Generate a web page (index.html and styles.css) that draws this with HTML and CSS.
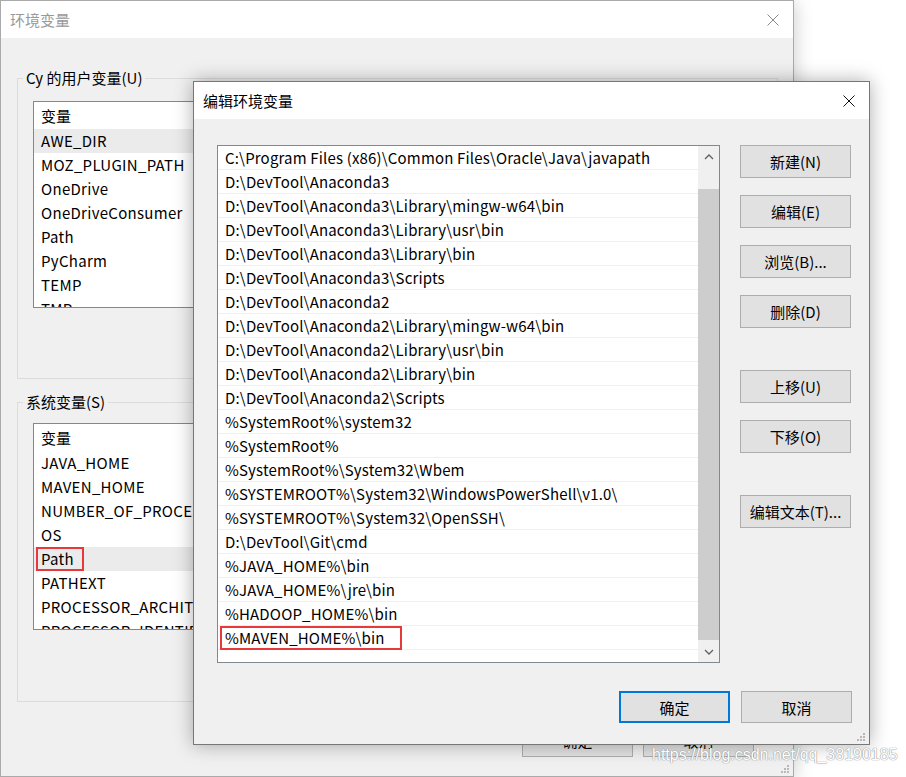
FILE: index.html
```html
<!DOCTYPE html>
<html lang="zh-CN">
<head>
    <meta charset="UTF-8">
    <title>编辑环境变量</title>
    <link rel="stylesheet" href="styles.css">
</head>
<body>
<div class="desk">
    <!-- background window: 环境变量 -->
    <div class="win main-win">
        <div class="titlebar inactive">
            <span class="title">环境变量</span>
            <svg class="close" width="12" height="12" viewBox="0 0 12 12"><path d="M0.5 0.5 L11.5 11.5 M11.5 0.5 L0.5 11.5" stroke="#8a8a8a" stroke-width="1" fill="none"/></svg>
        </div>
        <div class="win-body">
            <fieldset class="group user-group">
                <legend>Cy 的用户变量(U)</legend>
                <div class="listview">
                    <div class="lv-head">变量</div>
                    <div class="lv-row selected">AWE_DIR</div>
                    <div class="lv-row">MOZ_PLUGIN_PATH</div>
                    <div class="lv-row">OneDrive</div>
                    <div class="lv-row">OneDriveConsumer</div>
                    <div class="lv-row">Path</div>
                    <div class="lv-row">PyCharm</div>
                    <div class="lv-row">TEMP</div>
                    <div class="lv-row">TMP</div>
                </div>
            </fieldset>
            <fieldset class="group sys-group">
                <legend>系统变量(S)</legend>
                <div class="listview">
                    <div class="lv-head">变量</div>
                    <div class="lv-row">JAVA_HOME</div>
                    <div class="lv-row">MAVEN_HOME</div>
                    <div class="lv-row">NUMBER_OF_PROCESSORS</div>
                    <div class="lv-row">OS</div>
                    <div class="lv-row selected"><span class="mark">Path</span></div>
                    <div class="lv-row">PATHEXT</div>
                    <div class="lv-row">PROCESSOR_ARCHITECTURE</div>
                    <div class="lv-row">PROCESSOR_IDENTIFIER</div>
                </div>
            </fieldset>
            <div class="main-actions">
                <button class="btn">确定</button>
                <button class="btn">取消</button>
            </div>
        </div>
        <svg class="grip" width="9" height="9" viewBox="0 0 9 9" fill="#b8b8b8">
            <rect x="6" y="0" width="2" height="2"/>
            <rect x="3" y="3" width="2" height="2"/><rect x="6" y="3" width="2" height="2"/>
            <rect x="0" y="6" width="2" height="2"/><rect x="3" y="6" width="2" height="2"/><rect x="6" y="6" width="2" height="2"/>
        </svg>
    </div>

    <!-- front dialog: 编辑环境变量 -->
    <div class="win edit-win">
        <div class="titlebar">
            <span class="title">编辑环境变量</span>
            <svg class="close" width="12" height="12" viewBox="0 0 12 12"><path d="M0.5 0.5 L11.5 11.5 M11.5 0.5 L0.5 11.5" stroke="#111" stroke-width="1" fill="none"/></svg>
        </div>
        <div class="edit-body">
            <div class="edit-main">
                <div class="path-list">
                    <div class="path-rows">
                        <div class="path-row">C:\Program Files (x86)\Common Files\Oracle\Java\javapath</div>
                        <div class="path-row">D:\DevTool\Anaconda3</div>
                        <div class="path-row">D:\DevTool\Anaconda3\Library\mingw-w64\bin</div>
                        <div class="path-row">D:\DevTool\Anaconda3\Library\usr\bin</div>
                        <div class="path-row">D:\DevTool\Anaconda3\Library\bin</div>
                        <div class="path-row">D:\DevTool\Anaconda3\Scripts</div>
                        <div class="path-row">D:\DevTool\Anaconda2</div>
                        <div class="path-row">D:\DevTool\Anaconda2\Library\mingw-w64\bin</div>
                        <div class="path-row">D:\DevTool\Anaconda2\Library\usr\bin</div>
                        <div class="path-row">D:\DevTool\Anaconda2\Library\bin</div>
                        <div class="path-row">D:\DevTool\Anaconda2\Scripts</div>
                        <div class="path-row">%SystemRoot%\system32</div>
                        <div class="path-row">%SystemRoot%</div>
                        <div class="path-row">%SystemRoot%\System32\Wbem</div>
                        <div class="path-row">%SYSTEMROOT%\System32\WindowsPowerShell\v1.0\</div>
                        <div class="path-row">%SYSTEMROOT%\System32\OpenSSH\</div>
                        <div class="path-row">D:\DevTool\Git\cmd</div>
                        <div class="path-row">%JAVA_HOME%\bin</div>
                        <div class="path-row">%JAVA_HOME%\jre\bin</div>
                        <div class="path-row">%HADOOP_HOME%\bin</div>
                        <div class="path-row"><span class="mark">%MAVEN_HOME%\bin</span></div>
                    </div>
                    <div class="vscroll">
                        <div class="arrow">
                            <svg width="10" height="6" viewBox="0 0 10 6"><polyline points="1,5 5,1 9,5" fill="none" stroke="#606060" stroke-width="1.3"/></svg>
                        </div>
                        <div class="track-top"></div>
                        <div class="thumb"></div>
                        <div class="track-bottom"></div>
                        <div class="arrow">
                            <svg width="10" height="6" viewBox="0 0 10 6"><polyline points="1,1 5,5 9,1" fill="none" stroke="#606060" stroke-width="1.3"/></svg>
                        </div>
                    </div>
                </div>
                <div class="side-buttons">
                    <button class="btn">新建(N)</button>
                    <button class="btn">编辑(E)</button>
                    <button class="btn">浏览(B)...</button>
                    <button class="btn">删除(D)</button>
                    <button class="btn gap">上移(U)</button>
                    <button class="btn">下移(O)</button>
                    <button class="btn gap">编辑文本(T)...</button>
                </div>
            </div>
            <div class="edit-footer">
                <button class="btn default">确定</button>
                <button class="btn">取消</button>
            </div>
        </div>
        <svg class="grip" width="9" height="9" viewBox="0 0 9 9" fill="#b8b8b8">
            <rect x="6" y="0" width="2" height="2"/>
            <rect x="3" y="3" width="2" height="2"/><rect x="6" y="3" width="2" height="2"/>
            <rect x="0" y="6" width="2" height="2"/><rect x="3" y="6" width="2" height="2"/><rect x="6" y="6" width="2" height="2"/>
        </svg>
    </div>

    <div class="watermark">https://blog.csdn.net/qq_38190185</div>
</div>
</body>
</html>
```

FILE: styles.css
```css
body {
    margin: 0;
    background: #fff;
    font-family: "Noto Sans CJK SC", "Noto Sans", sans-serif;
    font-size: 15px;
    color: #000;
}
.desk {
    position: relative;
    width: 906px;
    height: 777px;
    overflow: hidden;
}

/* windows */
.win {
    position: absolute;
    box-sizing: border-box;
    display: flex;
    flex-direction: column;
    background: #f0f0f0;
}
.main-win {
    left: 0;
    top: 0;
    width: 794px;
    height: 777px;
    border: 1px solid #aaa;
    box-shadow: 3px 2px 16px rgba(0, 0, 0, 0.16);
}
.edit-win {
    left: 193px;
    top: 81px;
    width: 677px;
    height: 664px;
    border: 1px solid #777;
    box-shadow: 0 0 18px rgba(0, 0, 0, 0.32);
}
.titlebar {
    flex: none;
    height: 37px;
    background: #fff;
    display: flex;
    align-items: center;
    justify-content: space-between;
    padding: 0 14px 0 9px;
}
.titlebar.inactive {
    color: #999;
}
.close {
    display: block;
}
.grip {
    position: absolute;
    right: 3px;
    bottom: 2px;
}

/* background window */
.win-body {
    padding: 0 15px 0 16px;
}
.group {
    margin: 0;
    padding: 0 0 70px 5px;
    border: 1px solid #dcdcdc;
    min-width: 0;
}
.group legend {
    padding: 0 3px;
    line-height: 20px;
}
.user-group {
    margin-top: 30px;
}
.sys-group {
    margin-top: 13px;
    padding-bottom: 71px;
}
.listview {
    margin: 13px 0 0 10px;
    height: 207px;
    box-sizing: border-box;
    border: 1px solid #828790;
    background: #fff;
    overflow: hidden;
}
.sys-group .listview {
    margin-top: 11px;
}
.lv-head {
    height: 27px;
    line-height: 27px;
    padding-left: 7px;
}
.lv-row {
    height: 24px;
    line-height: 24px;
    padding-left: 7px;
    white-space: nowrap;
    letter-spacing: 0.3px;
}
.lv-row.selected {
    background: #ebebeb;
}
.mark {
    display: inline-block;
    margin-left: -5px;
    padding: 0 8px 0 3px;
    line-height: 20px;
    border: 2px solid #e8393a;
    vertical-align: top;
}
.main-actions {
    display: flex;
    justify-content: flex-end;
    gap: 10px;
    margin: 22px 24px 0 0;
}

/* buttons */
.btn {
    box-sizing: border-box;
    width: 111px;
    height: 33px;
    padding: 0;
    border: 1px solid #adadad;
    background: #e1e1e1;
    font-family: inherit;
    font-size: 15px;
    color: #000;
}
.btn.default {
    border: 2px solid #0078d7;
}

/* edit dialog */
.edit-body {
    padding: 26px 17px 0 23px;
}
.edit-main {
    display: flex;
}
.path-list {
    width: 503px;
    height: 518px;
    box-sizing: border-box;
    border: 1px solid #828790;
    background: #fff;
    display: flex;
}
.path-rows {
    width: 480px;
}
.path-row {
    box-sizing: border-box;
    height: 24px;
    border-bottom: 1px solid #f0f0f0;
    padding-left: 7px;
    display: flex;
    align-items: center;
    white-space: nowrap;
    letter-spacing: 0.17px;
}
.path-row .mark {
    line-height: 20px;
    padding-right: 15px;
}
.vscroll {
    width: 21px;
    background: #f0f0f0;
    display: flex;
    flex-direction: column;
}
.vscroll .arrow {
    height: 21px;
    display: flex;
    align-items: center;
    justify-content: center;
}
.track-top {
    height: 22px;
}
.thumb {
    height: 451px;
    background: #cdcdcd;
}
.track-bottom {
    height: 1px;
}
.side-buttons {
    margin-left: 20px;
    display: flex;
    flex-direction: column;
}
.side-buttons .btn + .btn {
    margin-top: 17px;
}
.side-buttons .btn.gap {
    margin-top: 42px;
}
.edit-footer {
    display: flex;
    justify-content: flex-end;
    gap: 11px;
    margin-top: 28px;
}
.edit-footer .btn {
    height: 32px;
}

.watermark {
    position: absolute;
    left: 652px;
    top: 746px;
    font-family: "Liberation Sans", sans-serif;
    font-size: 16px;
    color: #fff;
    text-shadow: 0 0 1px #8a8a8a, 0 0 1px #8a8a8a;
}
```
